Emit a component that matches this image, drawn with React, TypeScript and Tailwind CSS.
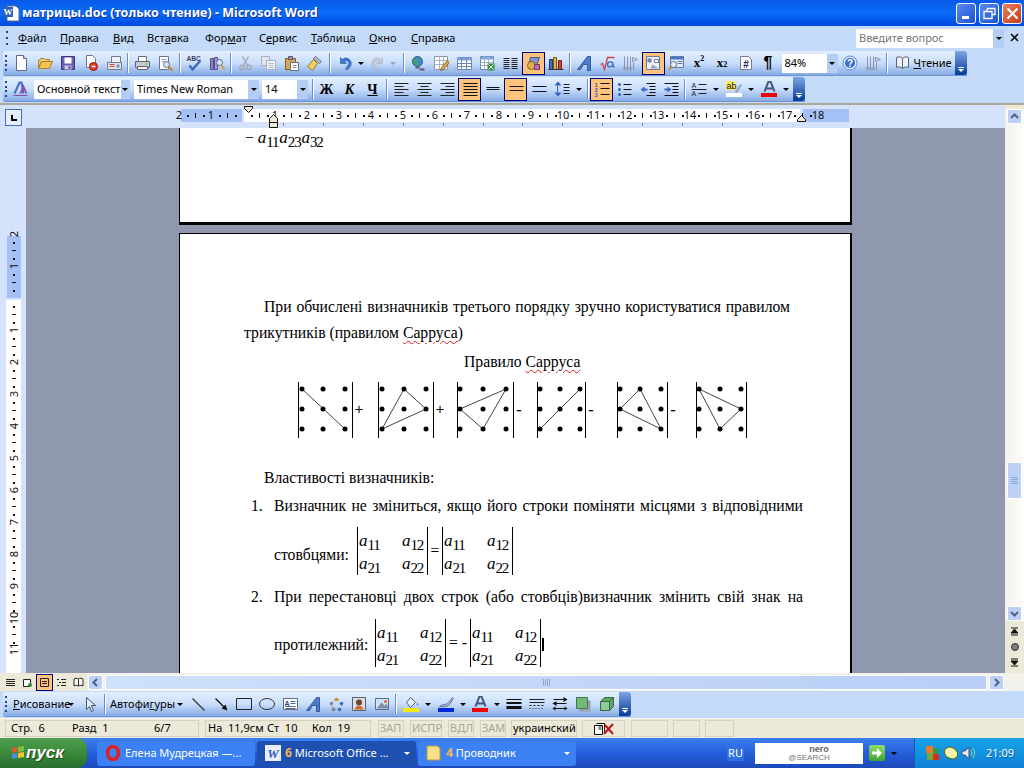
import React from 'react';

const Ico: React.FC<{ children: React.ReactNode; w?: number }> = ({ children, w = 16 }) => (
  <svg width={w} height={16} viewBox={`0 0 ${w} 16`} className="block shrink-0">
    <g transform="translate(.5 .5)">{children}</g>
  </svg>
);

// toolbar icons, 16x16
const icons: Record<string, React.ReactNode> = {
  new: <><path d="M2 0h7l3 3v12H2z" fill="#fff" stroke="#5a6b8c" /><path d="M9 0v3h3" fill="#d8e4f6" stroke="#5a6b8c" /></>,
  open: <><path d="M1 5h1l1-2h4l1 1h4v2H4L1 13z" fill="#f6d66b" stroke="#a5803a" /><path d="M1 13l3-7h11l-3 7z" fill="#f3c34f" stroke="#a5803a" /></>,
  save: <><path d="M1 1h13v13H1z" fill="#6a62b8" stroke="#3a3580" /><path d="M4 2h7v6H4z" fill="#fff" /><path d="M4 10h7v4H4z" fill="#c9c9da" /><path d="M8 11h2v2H8z" fill="#3a3580" /></>,
  perm: <><path d="M3 0h6l3 3v9H3z" fill="#fff" stroke="#6a7690" /><circle cx="10" cy="11" r="4" fill="#e23b22" stroke="#8d1d0d" /><path d="M8 11h4" stroke="#fff" strokeWidth="1.500" /></>,
  mail: <><path d="M5 1h9v9H5z" fill="#eef2f8" stroke="#707b92" /><path d="M1 7h14v7H1z" fill="#dfe4ec" stroke="#707b92" /><path d="M3 9h5M3 11h5" stroke="#c8482a" /><path d="M10 9h3v3h-3z" fill="#6d8fc8" /></>,
  print: <><path d="M4 1h8v5H4z" fill="#fff" stroke="#6d6d78" /><path d="M1 6h14v6H1z" fill="#c9cbd4" stroke="#62636e" /><path d="M3 11h10v3H3z" fill="#f2f2f4" stroke="#62636e" /><path d="M11 8h2v1h-2z" fill="#36c036" /></>,
  preview: <><path d="M2 1h9v13H2z" fill="#fff" stroke="#6a7690" /><path d="M4 4h5M4 6h3" stroke="#9aa3b5" /><circle cx="9" cy="9" r="3" fill="#d7e9fb" stroke="#5a6b8c" /><path d="M11 11l4 4" stroke="#c58a22" strokeWidth="2" /></>,
  spell: <><text x="0" y="5" fontSize="6.500" fontWeight="700" fill="#37425c" fontFamily="'Liberation Sans',sans-serif">ABC</text><path d="M3 10l3 4 8-9" fill="none" stroke="#3b69c2" strokeWidth="2.400" /></>,
  research: <><path d="M1 3h3v11H1z" fill="#8d80c4" stroke="#5a5090" /><path d="M5 2h3v12H5z" fill="#a99ad2" stroke="#5a5090" /><circle cx="10" cy="7" r="3" fill="#dbeafb" stroke="#5a6b8c" /><path d="M12 10l3 4" stroke="#d7a032" strokeWidth="2" /></>,
  cut: <><path d="M5 1l5 9M11 1l-5 9" stroke="#a4a9b5" strokeWidth="1.500" /><circle cx="4.500" cy="12" r="2.200" fill="none" stroke="#a4a9b5" strokeWidth="1.500" /><circle cx="11.500" cy="12" r="2.200" fill="none" stroke="#a4a9b5" strokeWidth="1.500" /></>,
  copy: <><path d="M1 1h8v9H1z" fill="#dfe5f0" stroke="#a9afbe" /><path d="M6 5h9v9H6z" fill="#eef1f6" stroke="#a9afbe" /><path d="M8 8h5M8 10h5M8 12h5" stroke="#b7bcc9" /></>,
  paste: <><path d="M2 3h10v11H2z" fill="#d6a75a" stroke="#7b5c25" /><path d="M5 1h4v3H5z" fill="#9ca3b2" stroke="#55586a" /><path d="M7 7h8v8H7z" fill="#fff" stroke="#68708a" /><path d="M9 10h4M9 12h4" stroke="#8a90a2" /></>,
  painter: <><path d="M9 1l6 5-2 2-6-5z" fill="#b9c2d4" stroke="#656d80" /><path d="M7 4l4 4-5 7-5-4z" fill="#f2cf5f" stroke="#93782e" /></>,
  undo: <path d="M3 2v6h6L7 6c3-2 5 1 4 3l-3 5h2c4-3 5-7 2-10-2-2-5-2-7 0z" fill="#3f79d4" stroke="#25509f" strokeWidth=".6" />,
  redo: <path d="M13 2v6H7l2-2c-3-2-5 1-4 3l3 5H6C2 11 1 7 4 4c2-2 5-2 7 0z" fill="#c2c8d6" stroke="#a8afbf" strokeWidth=".6" />,
  link: <><circle cx="7" cy="6" r="5" fill="#3d8ad2" stroke="#2f5a90" /><path d="M4 3l3 1-1 3 3 2-3 1-3-3zM8 2l3 2-1 2z" fill="#46a84a" /><path d="M5 12h4M9 14h5" stroke="#5a6170" strokeWidth="2" /></>,
  tables: <><path d="M1 1h13v13H1z" fill="#fff" stroke="#8a94aa" /><path d="M1 5h13M1 9h13M6 1v13M10 1v13" stroke="#aab3c6" /><path d="M7 15l1-3 6-7 2 2-6 7z" fill="#e3a74c" stroke="#8a5c24" /></>,
  grid: <><path d="M1 2h14v12H1z" fill="#fff" stroke="#6d86b4" /><path d="M1 2h14v3H1z" fill="#7ea5de" /><path d="M1 8h14M1 11h14M5 2v12M10 2v12" stroke="#6d86b4" /></>,
  excel: <><path d="M1 1h13v13H1z" fill="#fff" stroke="#6d86b4" /><path d="M1 1h13v3H1z" fill="#7ea5de" /><path d="M1 7h13M1 10h13M5 1v13M9 1v13" stroke="#9fb0cc" /><path d="M8 8h7v7H8z" fill="#2f8f3e" /><path d="M9 9l5 5M14 9l-5 5" stroke="#fff" /></>,
  cols: <path d="M1 3h6M9 3h6M1 5h6M9 5h6M1 7h6M9 7h6M1 9h6M9 9h6M1 11h6M9 11h6M1 13h6M9 13h6" stroke="#222" />,
  shapes: <><path d="M5 2h9l-3 8H3z" fill="#7e9bd6" stroke="#3c558f" /><circle cx="6" cy="10" r="4" fill="#e0b14c" stroke="#7f6226" /><path d="M9 9h5v5H9z" fill="#c56bb0" stroke="#70396a" /></>,
  chart: <><path d="M1 4h3v10H1z" fill="#3c6ec6" stroke="#1e3c7a" /><path d="M5 2h3v12H5z" fill="#e8b23a" stroke="#7a5a16" /><path d="M10 5h3v9h-3z" fill="#d5402a" stroke="#7a1e12" /><path d="M0 14h15" stroke="#333" /></>,
  wordart: <path d="M1 14L11 1h3v14h-3V9H7l-3 5z" fill="#4b7cc9" stroke="#234a90" strokeWidth=".8" />,
  sqrt: <><path d="M1 9l2-1 2 6 3-12h7" fill="none" stroke="#c24848" strokeWidth="1.300" /><path d="M13 7c-2-1-5-1-5 2s3 3 5 1l2 2M13 7l1 4" fill="none" stroke="#3a6bc0" strokeWidth="1.400" /></>,
  handle: <path d="M2 1v13M5 1v13M8 1v13M1 12l1 3 1-3M4 12l1 3 1-3M7 12l1 3 1-3M10 2l5 2-5 2zM11 7v8" fill="none" stroke="#8995ad" />,
  map: <><path d="M1 1h13v13H1z" fill="#eef3fb" stroke="#6f7c98" /><path d="M2 3h4v4H2z" fill="#6682b8" /><path d="M7 9l6 4H5z" fill="#9aa4b8" /><path d="M9 4h4v3H9z" fill="#fff" stroke="#6f7c98" /></>,
  look: <><path d="M2 1h13v11H2z" fill="#dfe8f7" stroke="#6f7c98" /><path d="M2 1h13v3H2z" fill="#4a78c6" /><path d="M9 6h5M9 8h5" stroke="#6f7c98" /><circle cx="5" cy="9" r="3" fill="#e9f2fc" stroke="#5a6b8c" /><path d="M3 11l-2.500 3" stroke="#c58a22" strokeWidth="2" /></>,
  hash: <><path d="M3 1h8l3 3v10H3z" fill="#fff" stroke="#6f7c98" /><text x="8.500" y="12" fontSize="10" fontWeight="700" textAnchor="middle" fill="#1a2d6b" fontFamily="'Liberation Sans',sans-serif">#</text></>,
  help: <><circle cx="7.500" cy="7.500" r="7" fill="#dfe8f8" stroke="#5a87dc" /><circle cx="7.500" cy="7.500" r="5" fill="#3b6bcb" /><text x="7.500" y="11" fontSize="10" fontWeight="700" textAnchor="middle" fill="#fff" fontFamily="'Liberation Sans',sans-serif">?</text></>,
  styles: <><path d="M2 12L7 1h2l2 11" fill="none" stroke="#3f6fc4" strokeWidth="2" /><path d="M8 12l3-7 3 7" fill="none" stroke="#8a4aa8" strokeWidth="1.800" /><path d="M1 14h14" stroke="#8a4aa8" /></>,
  alL: <path d="M1 2h14M1 5h9M1 8h14M1 11h9M1 14h14" stroke="#222" />,
  alC: <path d="M1 2h14M4 5h8M1 8h14M4 11h8M1 14h14" stroke="#222" />,
  alR: <path d="M1 2h14M6 5h9M1 8h14M6 11h9M1 14h14" stroke="#222" />,
  alJ: <path d="M1 2h14M1 5h14M1 8h14M1 11h14M1 14h14" stroke="#111" />,
  one: <path d="M1 6h13M1 8h13" stroke="#111" />,
  mid: <path d="M1 5h14M1 9h14" stroke="#111" />,
  two: <path d="M1 5h14M1 10h14" stroke="#111" />,
  line: <><path d="M3.500 0L0 4h7zM3.500 15L0 11h7z" fill="#2f62bb" /><path d="M3 4v7" stroke="#2f62bb" /><path d="M9 3h6M9 6h6M9 9h6M9 12h6" stroke="#222" /></>,
  num: <><path d="M6 2h9M6 7h9M6 13h9" stroke="#111" /><text x="0" y="5" fontSize="6" fill="#2f62bb" fontWeight="700" fontFamily="'Liberation Sans',sans-serif">1</text><text x="0" y="10" fontSize="6" fill="#2f62bb" fontWeight="700" fontFamily="'Liberation Sans',sans-serif">2</text><text x="0" y="15" fontSize="6" fill="#2f62bb" fontWeight="700" fontFamily="'Liberation Sans',sans-serif">3</text></>,
  bul: <><path d="M6 3h8M6 8h8M6 13h8" stroke="#111" /><circle cx="2" cy="3" r="1.500" fill="#3a5fae" /><circle cx="2" cy="8" r="1.500" fill="#3a5fae" /><circle cx="2" cy="13" r="1.500" fill="#3a5fae" /></>,
  outd: <><path d="M6 2h9M9 5h6M9 8h6M9 11h6M6 14h9" stroke="#111" /><path d="M0 8l4-3v2h3v2H4v2z" fill="#3a6bc0" /></>,
  ind: <><path d="M1 2h14M9 5h6M9 8h6M9 11h6M1 14h14" stroke="#111" /><path d="M8 8L4 5v2H1v2h3v2z" fill="#3a6bc0" /></>,
  bord: <><text x="0" y="6" fontSize="7" fill="#222" fontFamily="'Liberation Sans',sans-serif">A</text><text x="0" y="14" fontSize="7" fill="#222" fontFamily="'Liberation Sans',sans-serif">A</text><path d="M7 3h8M7 12h8M0 8h15" stroke="#222" /></>,
  mark: <><path d="M-.5-.5h9v9h-9z" fill="#f5ee5a" /><text x="0" y="7.500" fontSize="9" fill="#111" fontFamily="'Liberation Sans',sans-serif">ab</text><path d="M9 10l5-7 1 1-5 7z" fill="#b8bfd0" stroke="#5a6b8c" strokeWidth=".5" /><path d="M-.5 11.500h16v4h-16z" fill="#fff" /></>,
  colorA: <><path d="M3 10L7 0h2l4 10M5 7h6" fill="none" stroke="#3f557f" strokeWidth="2" /><path d="M-.5 11.500h16v4h-16z" fill="#f00000" /></>,
  arrowPtr: <path d="M4 1v12l3-3 2 5 2-1-2-5h4z" fill="#e5edf8" stroke="#4a5670" />,
  lineT: <path d="M2 2l12 12" stroke="#333" strokeWidth="1.200" />,
  arrowT: <><path d="M2 2l9 9" stroke="#111" strokeWidth="1.200" /><path d="M14 14l-6-2 4-4z" fill="#111" /></>,
  rect: <path d="M0 2h15v11H0z" fill="none" stroke="#222" />,
  oval: <ellipse cx="7.500" cy="7.500" rx="7.500" ry="5.500" fill="none" stroke="#333" />,
  tbox: <><path d="M1 2h14v11H1z" fill="#fff" stroke="#5a6b8c" /><text x="2" y="9" fontSize="7" fill="#1d3f85" fontWeight="700" fontFamily="'Liberation Sans',sans-serif">A</text><path d="M8 5h5M8 7h5M3 10h10M3 12h10" stroke="#5a6b8c" /></>,
  diagram: <><circle cx="8" cy="8" r="5" fill="none" stroke="#8a94a8" strokeDasharray="2 2" /><circle cx="8" cy="3" r="1.800" fill="#d68b22" /><circle cx="13" cy="7" r="1.800" fill="#3a6bc0" /><circle cx="11" cy="13" r="1.800" fill="#3a6bc0" /><circle cx="5" cy="13" r="1.800" fill="#7b8290" /><circle cx="3" cy="7" r="1.800" fill="#7b8290" /></>,
  clip: <><path d="M1 1h13v13H1z" fill="#d8dde8" stroke="#5a6170" /><circle cx="7.500" cy="6" r="3" fill="#6b4a2a" /><path d="M3 13c1-5 8-5 9 0z" fill="#cc6a2a" /></>,
  pic: <><path d="M1 2h13v11H1z" fill="#cfe3f7" stroke="#5a6b8c" /><path d="M2 12l5-6 3 3 2-2 2 5z" fill="#7d8fa8" /><circle cx="11" cy="5" r="1.500" fill="#e2632e" /></>,
  fill: <><path d="M3 6l4-5 5 5-5 5z" fill="#e9eef7" stroke="#4d5a75" /><path d="M14 6c1 2 1 3 0 3s-1-1 0-3" fill="#4a78c6" /><path d="M-.5 11.500h16v4h-16z" fill="#f5ea10" /></>,
  pen: <><path d="M1 10c3-3 7-1 9-4l4-5 1 1-4 6c-3 3-7 2-10 2z" fill="#a8b6d3" stroke="#47577c" strokeWidth=".7" /><path d="M-.5 11.500h16v4h-16z" fill="#0028d8" /></>,
  w3: <><path d="M0 3h15" stroke="#111" /><path d="M0 6.500h15" stroke="#111" strokeWidth="2" /><path d="M0 11h15" stroke="#111" strokeWidth="3" /></>,
  dash: <path d="M0 3h15M0 6h15M0 9h2M4 9h2M8 9h2M12 9h2M0 12h1M3 12h1M6 12h1M9 12h1M12 12h1" stroke="#222" />,
  arrows: <><path d="M1 3h13M1 7h13M1 12h13" stroke="#111" /><path d="M15 3l-4-2.500v5zM0 7l4-2.500v5zM0 12l3-2v4zM15 12l-3-2v4z" fill="#111" /></>,
  shadow: <><path d="M4 4h11v11H4z" fill="#9aa0ab" /><path d="M1 1h11v11H1z" fill="#74b87a" stroke="#3f7a46" /></>,
  d3: <><path d="M2 5l4-4h9v9l-4 4H2z" fill="#5ea666" stroke="#3a6a42" /><path d="M2 5h9v9H2z" fill="#8ecb93" stroke="#3a6a42" /><path d="M11 5l4-4" stroke="#3a6a42" /></>,
};

const Btn: React.FC<{ i: string; active?: boolean }> = ({ i, active }) => (
  <div
    className={`w-[23px] h-[23px] shrink-0 flex items-center justify-center ${
      active ? 'bg-[#ffc37c] border border-[#000080]' : ''
    }`}
  >
    <Ico>{icons[i]}</Ico>
  </div>
);

const Sep: React.FC<{ ml?: string }> = ({ ml = '' }) => (
  <div className={`w-[5px] h-[20px] shrink-0 flex justify-center ${ml}`}>
    <div className="w-px h-full bg-[#6a8ccb] border-r border-white box-content" />
  </div>
);

const Drop: React.FC<{ gray?: boolean; w?: string }> = ({ gray, w = 'w-[12px]' }) => (
  <div className={`${w} h-[23px] shrink-0 flex items-center justify-center`}>
    <div className={`border-x-[3px] border-x-transparent border-t-[3px] ${gray ? 'border-t-[#9aa3b5]' : 'border-t-black'}`} />
  </div>
);

const Grip = () => (
  <div className="w-[2px] ml-[2px] mr-[3px] h-[18px] shrink-0 flex flex-col justify-between py-px">
    {[0, 1, 2, 3].map(k => (
      <div key={k} className="w-[2px] h-[2px] bg-[#27418f]" />
    ))}
  </div>
);

const Chevron = () => (
  <div className="w-[12px] h-full shrink-0 rounded-r-[3px] bg-linear-to-b from-[#7ea4e4] to-[#003a96] flex flex-col items-center justify-end pb-[3px] gap-px">
    <div className="w-[6px] h-px bg-white" />
    <div className="border-x-[3px] border-x-transparent border-t-[3px] border-t-white" />
  </div>
);

const ComboBox: React.FC<{ w: string; text: string; color?: string }> = ({ w, text, color = 'text-black' }) => (
  <div className={`${w} h-[19px] shrink-0 bg-white flex items-center justify-between pl-[3px] text-[11px] ${color}`}>
    <span className="whitespace-nowrap">{text}</span>
    <div className="w-[11px] h-full bg-[#b4cdf5] flex items-center justify-center">
      <div className="border-x-[3px] border-x-transparent border-t-[3px] border-t-black" />
    </div>
  </div>
);

const menuItems: [string, string, string, string][] = [
  ['', 'Ф', 'айл', 'w-[42px]'],
  ['', 'П', 'равка', 'w-[53px]'],
  ['', 'В', 'ид', 'w-[34px]'],
  ['Вст', 'а', 'вка', 'w-[58px]'],
  ['Фор', 'м', 'ат', 'w-[54px]'],
  ['С', 'е', 'рвис', 'w-[52px]'],
  ['', 'Т', 'аблица', 'w-[58px]'],
  ['', 'О', 'кно', 'w-[42px]'],
  ['', 'С', 'правка', 'w-[60px]'],
];

const TitleBar = () => (
  <div className="h-[26px] shrink-0 flex items-center bg-linear-to-b from-[#0a5ae8] via-[#0a6cf8] to-[#0048e0] pl-[3px] pr-[2px]">
    <svg width="17" height="17" viewBox="0 0 17 17" className="shrink-0">
      <path d="M4 1h9l3 3v12H4z" fill="#fff" stroke="#5a6b8c" />
      <path d="M0 2h10v10H0z" fill="#2b5fb8" />
      <text x="5" y="10" fontSize="9" fontWeight="700" textAnchor="middle" fill="#fff" fontFamily="'Liberation Serif',serif">W</text>
    </svg>
    <span className="ml-[2px] text-white font-bold text-[12.500px] whitespace-nowrap [text-shadow:1px_1px_0_#0f2f9f] [font-family:'Noto_Sans',sans-serif]">
      матрицы.doc (только чтение) - Microsoft Word
    </span>
    <div className="ml-auto flex gap-[3px]">
      <div className="w-[20px] h-[21px] rounded-[3px] border border-white bg-linear-to-br from-[#5a8cf0] to-[#1c4ed0] flex items-end pl-[5px] pb-[4px]">
        <div className="w-[7px] h-[3px] bg-white" />
      </div>
      <div className="w-[20px] h-[21px] rounded-[3px] border border-white bg-linear-to-br from-[#5a8cf0] to-[#1c4ed0] flex items-center justify-center">
        <svg width="13" height="13" viewBox="0 0 13 13"><path d="M4 1.500h8v6H9M4 1.500V4M1 4.500h8v7H1z" fill="none" stroke="#fff" strokeWidth="1.300" /></svg>
      </div>
      <div className="w-[20px] h-[21px] rounded-[3px] border border-white bg-linear-to-br from-[#e8805c] to-[#c53a14] flex items-center justify-center">
        <svg width="13" height="13" viewBox="0 0 13 13"><path d="M1.500 1.500l10 10M11.500 1.500l-10 10" stroke="#fff" strokeWidth="2" /></svg>
      </div>
    </div>
  </div>
);

const MenuBar = () => (
  <div className="h-[24px] shrink-0 flex items-center bg-[#c3daf9] text-[11px] text-black">
    <div className="w-[2px] ml-[6px] h-[14px] flex flex-col justify-between">
      {[0, 1, 2].map(k => <div key={k} className="w-[2px] h-[2px] bg-[#27418f]" />)}
    </div>
    <div className="flex ml-[10px]">
      {menuItems.map(([a, u, b, w]) => (
        <div key={u + b} className={`${w} whitespace-nowrap`}>
          {a}<span className="underline">{u}</span>{b}
        </div>
      ))}
    </div>
    <div className="ml-auto mr-[4px] flex items-center">
      <ComboBox w="w-[148px]" text="Введите вопрос" color="text-[#777]" />
      <svg width="10" height="10" viewBox="0 0 10 10" className="ml-[6px]"><path d="M1 1l7 7M8 1L1 8" stroke="#111" strokeWidth="1.700" /></svg>
    </div>
  </div>
);

const StandardBar = () => (
  <div className="h-[27px] shrink-0 bg-[#c3daf9] pl-[3px] py-px">
    <div className="h-[25px] w-[964px] rounded-l-[3px] flex items-center bg-linear-to-b from-[#e3efff] via-[#c9defb] to-[#86abe4] border-b border-[#6f93cf]">
      <Grip />
      <Btn i="new" /><Btn i="open" /><Btn i="save" /><Btn i="perm" /><Btn i="mail" />
      <Sep /><Btn i="print" /><Btn i="preview" />
      <Sep ml="ml-[1.500px]" /><Btn i="spell" /><Btn i="research" />
      <Sep /><Btn i="cut" /><Btn i="copy" /><Btn i="paste" /><Btn i="painter" />
      <Sep ml="ml-[2px]" /><div className="ml-[1px]"><Btn i="undo" /></div><Drop w="w-[9px]" /><Btn i="redo" /><Drop gray w="w-[9px]" />
      <Sep ml="ml-[4px]" /><Btn i="link" /><Btn i="tables" /><Btn i="grid" /><Btn i="excel" /><Btn i="cols" /><Btn i="shapes" active /><Btn i="chart" />
      <Sep /><Btn i="wordart" /><Btn i="sqrt" /><Btn i="handle" /><Btn i="map" active /><Btn i="look" />
      <div className="w-[23px] h-[23px] shrink-0 flex items-center justify-center text-[13px] font-bold [font-family:'Liberation_Serif',serif]">x<sup className="text-[8px]">2</sup></div>
      <div className="w-[23px] h-[23px] shrink-0 flex items-center justify-center text-[13px] font-bold [font-family:'Liberation_Serif',serif]">x<sub className="text-[8px]">2</sub></div>
      <Btn i="hash" />
      <div className="w-[23px] h-[23px] shrink-0 flex items-center justify-center text-[16px] font-bold [font-family:'Liberation_Sans',sans-serif]">¶</div>
      <div className="ml-[2px]"><ComboBox w="w-[56px]" text="84%" /></div>
      <div className="ml-[1px]"><Btn i="help" /></div>
      <Btn i="handle" />
      <Sep />
      <div className="flex items-center ml-[5px] gap-[3px] text-[11px] whitespace-nowrap">
        <Ico><path d="M7 3C5 1 3 1 1 2v10c2-1 4-1 6 1 2-2 4-2 6-1V2c-2-1-4-1-6 1zM7 3v10" fill="#eef2f8" stroke="#5a6478" /></Ico>
        <span><span className="underline">Ч</span>тение</span>
      </div>
      <div className="ml-auto h-full"><Chevron /></div>
    </div>
  </div>
);

const FormatBar = () => (
  <div className="h-[26px] shrink-0 bg-[#c3daf9] pl-[3px]">
    <div className="h-[25px] w-[802px] rounded-l-[3px] flex items-center bg-linear-to-b from-[#e3efff] via-[#c9defb] to-[#86abe4] border-b border-[#6f93cf]">
      <Grip />
      <div className="ml-[2px]"><Ico>{icons.styles}</Ico></div>
      <div className="flex ml-[6px]">
        <ComboBox w="w-[96px]" text="Основной текст" />
        <div className="ml-[4px]"><ComboBox w="w-[125px]" text="Times New Roman" /></div>
        <div className="ml-[3px]"><ComboBox w="w-[46px]" text="14" /></div>
      </div>
      <Sep ml="ml-[2px]" />
      <div className="w-[23px] text-center text-[14px] font-bold [font-family:'Liberation_Serif',serif]">Ж</div>
      <div className="w-[23px] text-center text-[14px] font-bold italic [font-family:'Liberation_Serif',serif]">К</div>
      <div className="w-[23px] text-center text-[14px] font-bold underline [font-family:'Liberation_Serif',serif]">Ч</div>
      <Sep />
      <Btn i="alL" /><Btn i="alC" /><Btn i="alR" /><Btn i="alJ" active /><Btn i="one" /><Btn i="mid" active />
      <Btn i="two" /><Btn i="line" /><Drop />
      <Sep /><Btn i="num" active /><Btn i="bul" /><Btn i="outd" /><Btn i="ind" />
      <Sep /><Btn i="bord" /><Drop /><Btn i="mark" /><Drop /><Btn i="colorA" /><Drop />
      <div className="ml-auto h-full"><Chevron /></div>
    </div>
  </div>
);

const HRuler = () => {
  const ticks: React.ReactNode[] = [];
  for (let n = -2; n <= 18; n++) {
    const x = Math.round(243 + 31.95 * n);
    if (n !== 0) {
      ticks.push(
        <text key={`t${n}`} x={x} y={119} fontSize="11" textAnchor="middle" fill="#111" fontFamily="'Noto Sans',sans-serif">{n < 0 ? -n : n}</text>
      );
    }
    if (n < 18) {
      ticks.push(<rect key={`a${n}`} x={x + 8} y={115} width="2" height="2" fill="#111" />);
      ticks.push(<rect key={`b${n}`} x={x + 16} y={113} width="1" height="5" fill="#111" />);
      ticks.push(<rect key={`c${n}`} x={x + 24} y={115} width="2" height="2" fill="#111" />);
    }
  }
  const stops = [];
  for (let k = 0; k < 13; k++) {
    stops.push(<rect key={k} x={Math.round(283 + 39.9 * k)} y={123} width="1" height="3" fill="#888" />);
  }
  return (
    <div className="h-[25px] shrink-0 flex items-start bg-[#d4e3fb] border-t-2 border-[#aca899] pl-[5px]">
      <div className="w-[17px] h-[17px] mt-[4px] shrink-0 border border-[#3f6fc0] bg-[#e4eefd] flex items-center justify-center">
        <div className="w-[6px] h-[6px] border-l-2 border-b-2 border-black" />
      </div>
      <svg width="680" height="23" viewBox="176 105 680 23" className="ml-[154px] shrink-0 block">
        <rect x="181" y="109" width="61" height="13" fill="#a4c0f4" />
        <rect x="244" y="109" width="556" height="13" fill="#fff" />
        <rect x="803" y="109" width="46" height="13" fill="#a4c0f4" />
        {ticks}
        {stops}
        <path d="M244.500 106.500h8v2l-4 4-4-4z" fill="#ece9d8" stroke="#111" />
        <path d="M269.500 118.500l4-4 4 4v4h-8z" fill="#ece9d8" stroke="#111" />
        <path d="M269.500 122.500h8v5h-8z" fill="#ece9d8" stroke="#111" />
        <path d="M797.500 121.500v-2l4-4 4 4v2z" fill="#ece9d8" stroke="#111" />
      </svg>
    </div>
  );
};

const VRuler = () => {
  const items: React.ReactNode[] = [];
  for (let n = -2; n <= 11; n++) {
    const y = Math.round(298 + 31.95 * n);
    if (n !== 0) {
      items.push(
        <text key={`t${n}`} x={0} y={0} transform={`translate(18 ${y}) rotate(-90)`} fontSize="11" textAnchor="middle" fill="#111" fontFamily="'Noto Sans',sans-serif">{n < 0 ? -n : n}</text>
      );
    }
    if (n < 11) {
      items.push(<rect key={`a${n}`} x="13" y={y + 8} width="2" height="2" fill="#111" />);
      items.push(<rect key={`b${n}`} x="12" y={y + 16} width="4" height="1" fill="#111" />);
      items.push(<rect key={`c${n}`} x="13" y={y + 24} width="2" height="2" fill="#111" />);
    }
  }
  return (
    <svg width="26" height="545" viewBox="0 128 26 545" className="block shrink-0">
      <rect x="7" y="236" width="14" height="62" fill="#a4c0f4" />
      <rect x="6" y="300" width="15" height="373" fill="#fff" />
      {items}
    </svg>
  );
};

const A: React.FC<{ s: string }> = ({ s }) => (
  <span className="whitespace-nowrap">
    <i className="text-[17px]">a</i>
    <span className="text-[15px] tracking-[-1.200px] align-[-4px] mr-[1px]">{s}</span>
  </span>
);

const Matrix: React.FC<{ cells: string[] }> = ({ cells }) => (
  <div className="w-[71px] h-[48px] shrink-0 border-x border-black grid grid-cols-[43px_1fr] grid-rows-2 pl-px pt-[2px] leading-[24px]">
    {cells.map(c => <A key={c} s={c} />)}
  </div>
);

const mCells = ['11', '12', '21', '22'];

const Spell: React.FC<{ children: React.ReactNode }> = ({ children }) => (
  <span className="underline decoration-wavy decoration-[#e02020] decoration-1 underline-offset-2">{children}</span>
);

const Diagram = () => {
  const bars = [298, 352, 378, 433, 457, 513, 537, 585, 617, 667, 696, 746];
  const dots = [
    [302, 323, 345], [382, 404, 426], [460, 483, 506], [540, 560, 580], [620, 640, 661], [699, 720, 741],
  ];
  const shapes = [
    '302,389 345,429', '404,389 426,409 382,429 404,389', '506,389 460,409 483,429 506,389',
    '580,389 540,429', '640,389 620,409 661,429 640,389', '699,389 741,409 720,429 699,389',
  ];
  return (
    <svg width="450" height="57" viewBox="298 382 450 57" className="block ml-[118px] mt-[8px]">
      {bars.map(x => <path key={x} d={`M${x + 0.5} 382v56`} stroke="#000" />)}
      {shapes.map(p => <polyline key={p} points={p} fill="none" stroke="#444" />)}
      {dots.map(row => row.map(x => [389, 409, 429].map(y => (
        <circle key={`${x}-${y}`} cx={x} cy={y} r="2.500" fill="#000" />
      ))))}
      <g fontSize="15" fill="#000" stroke="#000" strokeWidth=".25" textAnchor="middle" fontFamily="'Liberation Serif',serif">
        <text x="359" y="414">+</text>
        <text x="440" y="414">+</text>
        <text x="519" y="414">-</text>
        <text x="591" y="414">-</text>
        <text x="673" y="414">-</text>
      </g>
    </svg>
  );
};

const Document = () => (
  <div className="flex-1 min-w-0 h-full bg-[#9098ad] overflow-hidden [font-family:'Liberation_Serif',serif] text-[15.7px] text-black">
    <div className="ml-[153px] w-[673px] h-[97px] bg-white border-l border-r-2 border-b-[3px] border-black pl-[65px] leading-[20px]">
      − <A s="11" /><A s="23" /><A s="32" />
    </div>
    <div className="ml-[153px] w-[673px] h-[560px] mt-[8px] bg-white border-l border-r-2 border-t border-black">
      <div className="h-[26px] leading-[26px] mt-[60px] ml-[84px] w-[526px] [text-align-last:justify]">
        При обчислені визначників третього порядку зручно користуватися правилом
      </div>
      <div className="h-[26px] leading-[26px] ml-[64px]">
        трикутників (правилом <Spell>Сарруса</Spell>)
      </div>
      <div className="h-[25px] leading-[25px] mt-[3px] ml-[284px]">
        Правило <Spell>Сарруса</Spell>
      </div>
      <Diagram />
      <div className="h-[26px] leading-[26px] mt-[26px] ml-[84px]">Властивості визначників:</div>
      <div className="h-[26px] leading-[26px] mt-[2px] ml-[71px] flex">
        <span className="w-[23px]">1.</span>
        <span className="w-[529px] [text-align-last:justify]">Визначник не зміниться, якщо його строки поміняти місцями з відповідними</span>
      </div>
      <div className="h-[48px] mt-[8px] ml-[94px] flex items-center">
        <span className="w-[83px] pt-[8px]">стовбцями:</span>
        <Matrix cells={mCells} />
        <span className="w-[14px] text-center">=</span>
        <Matrix cells={mCells} />
      </div>
      <div className="h-[26px] leading-[26px] mt-[9px] ml-[71px] flex">
        <span className="w-[23px]">2.</span>
        <span className="w-[529px] [text-align-last:justify]">При перестановці двох строк (або стовбців)визначник змінить свій знак на</span>
      </div>
      <div className="h-[48px] mt-[9px] ml-[94px] flex items-center">
        <span className="w-[101px] pt-[4px]">протилежний:</span>
        <Matrix cells={mCells} />
        <span className="w-[24px] text-center whitespace-nowrap">= -</span>
        <Matrix cells={mCells} />
        <div className="w-[2px] h-[13px] bg-black ml-px mt-[2px]" />
      </div>
    </div>
  </div>
);

const ScrollBtn: React.FC<{ d: string }> = ({ d }) => (
  <div className="w-[15px] h-[15px] rounded-[2px] border border-white bg-[#bdd1f6] flex items-center justify-center shrink-0">
    <svg width="9" height="9" viewBox="0 0 9 9"><path d={d} fill="none" stroke="#4d6185" strokeWidth="2" /></svg>
  </div>
);

const VScroll = () => (
  <div className="w-[19px] h-full shrink-0 bg-linear-to-r from-[#f3f1ec] to-[#fdfdfb] flex flex-col items-center">
    <div className="h-[6px] w-full shrink-0 bg-[#ece9d8] border-t-2 border-[#aca899]" />
    <ScrollBtn d="M1 6l3.500-3.500L8 6" />
    <div className="flex-1 w-full flex flex-col items-center">
      <div className="w-[15px] h-[37px] mt-[338px] rounded-[2px] border border-white bg-[#bdd1f6] flex flex-col items-center justify-center gap-px">
        {[0, 1, 2, 3].map(k => <div key={k} className="w-[7px] h-px bg-[#eef3fd] border-b border-[#8fa5cf]" />)}
      </div>
    </div>
    <ScrollBtn d="M1 3l3.500 3.500L8 3" />
    <div className="h-[52px] w-full shrink-0 bg-[#ece9d8] flex flex-col items-center justify-around py-[2px] text-[10px] leading-none">
      <svg width="9" height="9" viewBox="0 0 9 9"><path d="M1 1h7M4.500 2L1 6h7zM1 8h7" stroke="#111" fill="#111" /></svg>
      <div className="w-[8px] h-[8px] rounded-full bg-[#7d7d7d] border border-[#333]" />
      <svg width="9" height="9" viewBox="0 0 9 9"><path d="M1 1h7M4.500 7L1 3h7zM1 8h7" stroke="#111" fill="#111" /></svg>
    </div>
  </div>
);

const HScroll = () => (
  <div className="h-[18px] shrink-0 flex items-center bg-[#f3f1ec] pr-[20px]">
    <div className="w-[87px] h-full shrink-0 bg-[#ece9d8] flex items-center pl-[2px]">
      <div className="w-[17px] flex justify-center"><svg width="11" height="11" viewBox="0 0 11 11"><path d="M1 2.500h9M1 4.500h9M1 6.500h9M1 8.500h9" stroke="#222" /></svg></div>
      <div className="w-[17px] flex justify-center"><svg width="11" height="11" viewBox="0 0 11 11"><path d="M1.500 2.500h7v7h-7z" fill="#fff" stroke="#222" /><circle cx="8" cy="8" r="2" fill="#2f8f3e" /></svg></div>
      <div className="w-[17px] h-[17px] bg-[#ffc37c] border border-[#000080] flex items-center justify-center"><svg width="11" height="11" viewBox="0 0 11 11"><path d="M1.500 1.500h8v8h-8zM3 4.500h5M3 6.500h5" fill="none" stroke="#222" /></svg></div>
      <div className="w-[17px] flex justify-center"><svg width="11" height="11" viewBox="0 0 11 11"><path d="M1 2.500h2M5 2.500h5M3 5.500h2M6 5.500h4M1 8.500h2M5 8.500h5" stroke="#222" /></svg></div>
      <div className="w-[17px] flex justify-center"><svg width="11" height="11" viewBox="0 0 11 11"><path d="M5.500 2C4 1 2 1 1 2v7c1-1 3-1 4.500 0C7 8 9 8 10 9V2C9 1 7 1 5.500 2zM5.500 2v7" fill="#fff" stroke="#222" /></svg></div>
    </div>
    <div className="ml-px"><ScrollBtn d="M6 1L2.500 4.500 6 8" /></div>
    <div className="ml-[2px] mr-[2px] flex-1 h-[15px] rounded-[2px] border border-white bg-linear-to-r from-[#cfe0fb] to-[#b9cef7] flex items-center justify-center gap-px">
      {[0, 1, 2, 3].map(k => <div key={k} className="w-px h-[7px] bg-[#8fa5cf]" />)}
    </div>
    <ScrollBtn d="M3 1l3.500 3.500L3 8" />
  </div>
);

const DrawBar = () => (
  <div className="h-[27px] shrink-0 bg-[#c3daf9] pl-[3px] text-[11px] text-black">
    <div className="h-[25px] w-[628px] mt-px rounded-l-[3px] flex items-center bg-linear-to-b from-[#e3efff] via-[#c9defb] to-[#86abe4] border-b border-[#6f93cf]">
      <Grip />
      <span className="ml-[3px] w-[52px] whitespace-nowrap"><span className="underline">Р</span>исование</span>
      <Drop />
      <div className="ml-[1px]"><Btn i="arrowPtr" /></div>
      <Sep ml="ml-px" />
      <span className="ml-[3px] w-[64px] whitespace-nowrap">Автофи<span className="underline">г</span>уры</span>
      <Drop />
      <Btn i="lineT" /><Btn i="arrowT" /><Btn i="rect" /><Btn i="oval" /><Btn i="tbox" /><Btn i="wordart" /><Btn i="diagram" /><Btn i="clip" /><Btn i="pic" />
      <Sep /><div className="ml-px"><Btn i="fill" /></div><Drop /><Btn i="pen" /><Drop w="w-[11px]" /><Btn i="colorA" /><Drop w="w-[11px]" />
      <Btn i="w3" /><Btn i="dash" /><Btn i="arrows" /><Btn i="shadow" /><Btn i="d3" />
      <div className="ml-auto h-full"><Chevron /></div>
    </div>
  </div>
);

const Cell: React.FC<{ w: string; children?: React.ReactNode; ml?: string }> = ({ w, children, ml = 'ml-[6px]' }) => (
  <div className={`${w} ${ml} h-[17px] shrink-0 border border-[#d5d2c3] flex items-center whitespace-nowrap`}>{children}</div>
);

const StatusBar = () => (
  <div className="h-[20px] shrink-0 bg-[#ece9d8] border-t border-[#f7f6f0] flex items-center pl-[5px] text-[11px] text-black">
    <Cell w="w-[194px]" ml="ml-0">
      <span className="w-[66px] pl-[5px]">Стр.&nbsp; 6</span>
      <span className="w-[82px]">Разд&nbsp; 1</span>
      <span>6/7</span>
    </Cell>
    <Cell w="w-[166px]">
      <span className="w-[61px] pl-[2px]">На&nbsp; 11,9см</span>
      <span className="w-[45px]">Ст&nbsp; 10</span>
      <span>Кол&nbsp; 19</span>
    </Cell>
    <Cell w="w-[26px]" ml="ml-[7px]"><span className="pl-[1px] text-[#a9a797]">ЗАП</span></Cell>
    <Cell w="w-[32px]"><span className="pl-[1px] text-[#a9a797]">ИСПР</span></Cell>
    <Cell w="w-[26px]"><span className="pl-[1px] text-[#a9a797]">ВДЛ</span></Cell>
    <Cell w="w-[26px]"><span className="pl-[1px] text-[#a9a797]">ЗАМ</span></Cell>
    <Cell w="w-[66px]" ml="ml-[5px]"><span className="pl-[1px]">украинский</span></Cell>
    <Cell w="w-[43px]" ml="ml-[5px]">
      <svg width="22" height="14" viewBox="0 0 22 14" className="ml-[10px]">
        <path d="M1.500 3.500h8v9h-8zM3.500 1.500h8v9M5.500 5h3M5.500 7h3" fill="#fff" stroke="#111" />
        <path d="M11 12L20 2M12 3l8 9" stroke="#c01818" strokeWidth="2" />
      </svg>
    </Cell>
    <Cell w="w-[37px]" />
    <Cell w="w-[27px]" ml="ml-[5px]" />
    <Cell w="w-[29px]" ml="ml-[5px]" />
  </div>
);

const Task: React.FC<{ w: string; active?: boolean; drop?: boolean; icon: React.ReactNode; children: React.ReactNode }> = ({ w, active, drop, icon, children }) => (
  <div className={`${w} h-[25px] shrink-0 rounded-[3px] flex items-center pl-[8px] pr-[6px] gap-[4px] text-white text-[11px] whitespace-nowrap overflow-hidden ${active ? 'bg-[#1e50b0]' : 'bg-[#3c81f3]'}`}>
    {icon}
    <span className="flex-1 min-w-0">{children}</span>
    {drop && <div className="border-x-[3px] border-x-transparent border-t-[3px] border-t-white" />}
  </div>
);

const Taskbar = () => (
  <div className="h-[30px] shrink-0 flex items-center bg-linear-to-b from-[#3b7ff0] via-[#245edb] to-[#1c4ab8] text-white">
    <div className="w-[87px] h-full shrink-0 rounded-r-[10px] bg-linear-to-b from-[#4f9f4f] via-[#3a8a3a] to-[#2a6e2e] flex items-center pl-[11px] gap-[1px] [font-family:'Liberation_Sans',sans-serif] italic font-bold text-[17px] [text-shadow:1px_1px_1px_#1b451b]">
      <svg width="14" height="14" viewBox="0 0 14 14" className="shrink-0">
        <path d="M1 2l5-1v5l-5 1z" fill="#e8552a" /><path d="M7 1l6-1v5l-6 1z" fill="#7ec23c" />
        <path d="M1 8l5-1v5l-5 1z" fill="#4a8de8" /><path d="M7 7l6-1v5l-6 1z" fill="#f2c32e" />
      </svg>
      пуск
    </div>
    <div className="flex ml-[10px] gap-[2px]">
      <Task w="w-[158px]" icon={<svg width="16" height="16" viewBox="0 0 16 16" className="shrink-0"><ellipse cx="8" cy="8" rx="5.500" ry="6.500" fill="none" stroke="#e0201c" strokeWidth="3.500" /></svg>}>Елена Мудрецкая —...</Task>
      <Task w="w-[159px]" active drop icon={<svg width="16" height="16" viewBox="0 0 16 16" className="shrink-0"><path d="M0 0h16v16H0z" fill="#e9eefa" /><text x="8" y="13" fontSize="13" fontWeight="700" fontStyle="italic" textAnchor="middle" fill="#2b5fb8" fontFamily="'Liberation Serif',serif">W</text></svg>}><b className="text-[#f5b454] text-[12px]">6</b> Microsoft Office ...</Task>
      <Task w="w-[158px]" drop icon={<svg width="16" height="16" viewBox="0 0 16 16" className="shrink-0"><path d="M1 1h10l3 2v12H1z" fill="#f6e08a" stroke="#b99a3a" /></svg>}><b className="text-[#f5b454] text-[12px]">4</b> Проводник</Task>
    </div>
    <div className="w-[17px] h-[16px] ml-[151px] shrink-0 bg-[#2f6fe0] text-[11px] text-center leading-[16px]">RU</div>
    <div className="w-[108px] h-[21px] ml-[11px] shrink-0 bg-white flex flex-col items-center justify-center leading-none text-[#777] [font-family:'Liberation_Sans',sans-serif]">
      <span className="text-[9px] font-bold pl-[20px] text-[#666]">nero</span>
      <span className="text-[8px]">@SEARCH</span>
    </div>
    <div className="w-[16px] h-[16px] ml-[6px] shrink-0 rounded-[2px] bg-linear-to-b from-[#8fdc6a] to-[#3da32c] flex items-center justify-center">
      <svg width="12" height="12" viewBox="0 0 12 12"><path d="M1 4.500h5V1l5 5-5 5V7.500H1z" fill="#fff" /></svg>
    </div>
    <div className="ml-[6px] border-x-[3px] border-x-transparent border-t-[3px] border-t-black shrink-0" />
    <div className="ml-auto w-[110px] h-full shrink-0 bg-linear-to-b from-[#18a4e8] to-[#0f7fd6] border-l border-[#0c5fae] flex items-center pl-[10px] gap-[2px] text-[11px]">
      <svg width="16" height="16" viewBox="0 0 16 16" className="shrink-0"><path d="M1 1h7v7H1z" fill="#e87c2a" /><path d="M8 3h6v6H8z" fill="#2f9a54" /><path d="M2 8h6v7H2z" fill="#6ca83a" /><path d="M8 9h6v6H8z" fill="#d8301c" /></svg>
      <svg width="16" height="16" viewBox="0 0 16 16" className="shrink-0"><ellipse cx="8" cy="8" rx="7" ry="5.500" transform="rotate(30 8 8)" fill="#f5f5a8" stroke="#4d6a2a" /></svg>
      <svg width="16" height="16" viewBox="0 0 16 16" className="shrink-0"><path d="M1 6h3l4-4v12l-4-4H1z" fill="#dfe6f2" stroke="#3a4a72" /><path d="M10 5c1 2 1 4 0 6M12 3c2 3 2 7 0 10" fill="none" stroke="#8fe09a" /></svg>
      <span className="ml-[7px] [text-shadow:1px_1px_0_#0c5fae]">21:09</span>
    </div>
  </div>
);

const App: React.FC = () => (
  <div className="w-[1024px] h-[768px] flex flex-col overflow-hidden bg-[#c3daf9] [font-family:'Noto_Sans',sans-serif]">
    <TitleBar />
    <MenuBar />
    <StandardBar />
    <FormatBar />
    <div className="flex-1 min-h-0 flex">
      <div className="flex-1 min-w-0 flex flex-col">
        <HRuler />
        <div className="flex-1 min-h-0 flex bg-[#d4e3fb]">
          <VRuler />
          <Document />
        </div>
      </div>
      <VScroll />
    </div>
    <HScroll />
    <DrawBar />
    <StatusBar />
    <Taskbar />
  </div>
);

export default App;
